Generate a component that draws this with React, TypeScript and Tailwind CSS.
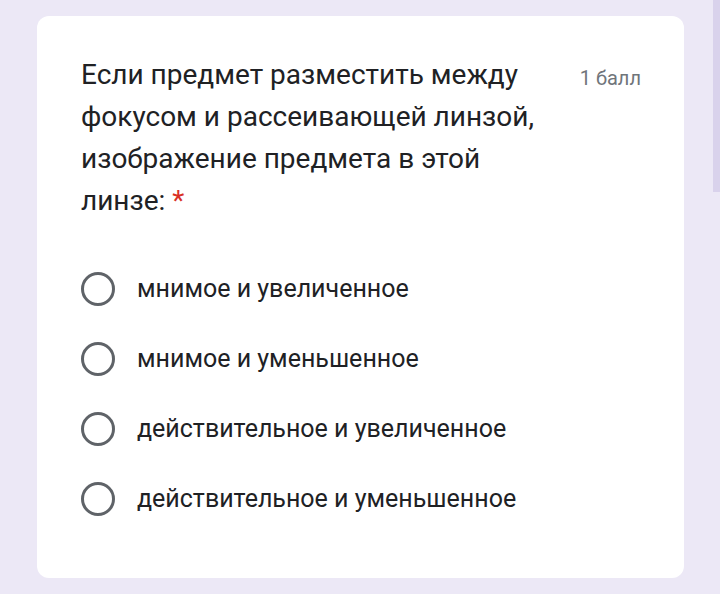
const options = [
  "мнимое и увеличенное",
  "мнимое и уменьшенное",
  "действительное и увеличенное",
  "действительное и уменьшенное",
];

function Radio() {
  return <span className="block h-[34px] w-[34px] shrink-0 rounded-full border-[3px] border-[#5f6368]" />;
}

export default function App() {
  return (
    <div className="relative min-h-[594px] w-[720px] bg-[#ece8f6] pl-[37px] pt-[16px] font-['Roboto',sans-serif]">
      <div className="w-[647px] rounded-[12px] bg-white pb-[44px] pl-[44px] pr-[43px] pt-[38px]">
        <div className="flex items-start">
          <div className="w-[475px] text-[28px] leading-[42px] text-[#202124]">
            Если предмет разместить между фокусом и рассеивающей линзой, изображение предмета в этой линзе:{" "}
            <span className="text-[#d93025]">*</span>
          </div>
          <div className="ml-auto pt-[9px] text-[20px] leading-[30px] text-[#70757a]">1 балл</div>
        </div>
        <div className="mt-[32px] flex flex-col">
          {options.map((o) => (
            <div key={o} className="flex h-[70px] items-center">
              <Radio />
              <span className="ml-[22px] text-[25px] text-[#202124]">{o}</span>
            </div>
          ))}
        </div>
      </div>
      <div className="absolute right-0 top-0 h-[192px] w-[7px] bg-[#d9d2ec]" />
    </div>
  );
}
